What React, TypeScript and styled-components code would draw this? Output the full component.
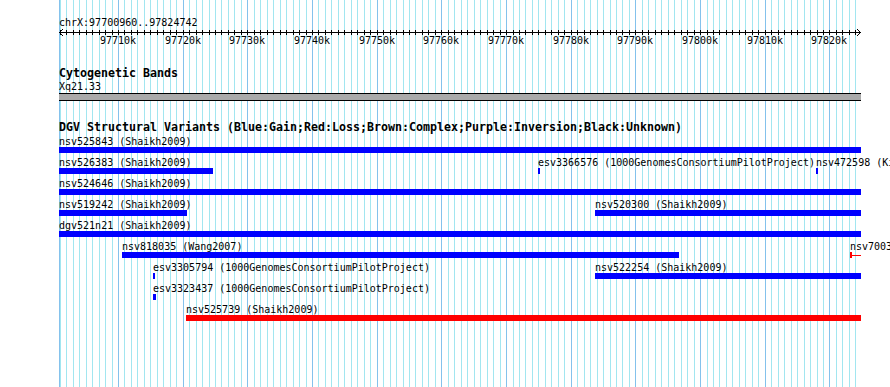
import * as React from 'react';
import styled, { createGlobalStyle } from 'styled-components';

const GlobalStyle = createGlobalStyle`
	html, body {
		margin: 0;
		padding: 0;
		background: #fff;
	}
`;

// genomic coordinate -> pixel column
const START = 97700960;
const X0 = 59.5;
const SCALE = 0.006468;
const toX = (pos: number) => Math.round(X0 + (pos - START) * SCALE);

const KBS = Array.from({ length: 124 }, (_, i) => 97701 + i);
const MAJOR = KBS.filter((kb) => kb % 10 === 0);

const Canvas = styled.div`
	position: relative;
	width: 890px;
	height: 387px;
	overflow: hidden;
	background: #fff;
	color: #000;
	font-family: "DejaVu Sans Mono", "Liberation Mono", monospace;
`;

const GridSvg = styled.svg`
	position: absolute;
	left: 0;
	top: 0;
`;

const Tracks = styled.div`
	position: relative;
	display: flex;
	flex-direction: column;
	padding-top: 16px;
`;

const Track = styled.section<{ $gap: number }>`
	display: flex;
	flex-direction: column;
	margin-top: ${(p) => p.$gap}px;
`;

const Gutter = styled.div`
	padding-left: 59px;
`;

const Small = styled.div`
	font-size: 10px;
	line-height: 13px;
	white-space: pre;
`;

const TrackTitle = styled.div`
	font-size: 11.63px;
	font-weight: bold;
	line-height: 13px;
	white-space: pre;
`;

const Scale = styled.div`
	position: relative;
	height: 18px;
`;

const ScaleSvg = styled.svg`
	position: absolute;
	left: 0;
	top: 0;
`;

const TickLabel = styled.span`
	position: absolute;
	top: 5px;
	width: 36px;
	text-align: center;
	font-size: 10px;
	line-height: 13px;
`;

const Band = styled.div`
	width: 802px;
	height: 6px;
	background: #aaaaaa;
	border-top: 1px solid #000;
	border-bottom: 1px solid #000;
`;

const Rows = styled.div`
	display: flex;
	flex-direction: column;
	margin-top: 1px;
`;

const Row = styled.div`
	position: relative;
	height: 21px;
`;

const Feature = styled.div`
	position: absolute;
	top: 0;
	display: flex;
	flex-direction: column;
`;

const Label = styled.span`
	font-size: 10px;
	line-height: 13px;
	white-space: pre;
`;

const Bar = styled.div<{ $color: string }>`
	height: 6px;
	margin-top: -1px;
	background: ${(p) => p.$color};
`;

const ClipMark = styled.div<{ $color: string }>`
	position: relative;
	height: 6px;
	margin-top: -1px;

	&::before {
		content: '';
		position: absolute;
		left: 0;
		top: 0;
		width: 2px;
		height: 6px;
		background: ${(p) => p.$color};
	}

	&::after {
		content: '';
		position: absolute;
		left: 2px;
		right: 0;
		top: 3px;
		height: 1px;
		background: ${(p) => p.$color};
	}
`;

type Variant = { x: number; w: number; label: string; color?: string; clipped?: boolean };

const BLUE = '#0000ff';
const RED = '#ff0000';

const rows: Variant[][] = [
	[{ x: 59, w: 802, label: 'nsv525843 (Shaikh2009)' }],
	[
		{ x: 59, w: 154, label: 'nsv526383 (Shaikh2009)' },
		{ x: 538, w: 2, label: 'esv3366576 (1000GenomesConsortiumPilotProject)' },
		{ x: 816, w: 2, label: 'nsv472598 (Kidd2008)' },
	],
	[{ x: 59, w: 802, label: 'nsv524646 (Shaikh2009)' }],
	[
		{ x: 59, w: 128, label: 'nsv519242 (Shaikh2009)' },
		{ x: 595, w: 266, label: 'nsv520300 (Shaikh2009)' },
	],
	[{ x: 59, w: 802, label: 'dgv521n21 (Shaikh2009)' }],
	[
		{ x: 122, w: 557, label: 'nsv818035 (Wang2007)' },
		{ x: 850, w: 11, label: 'nsv7003', color: RED, clipped: true },
	],
	[
		{ x: 153, w: 2, label: 'esv3305794 (1000GenomesConsortiumPilotProject)' },
		{ x: 595, w: 266, label: 'nsv522254 (Shaikh2009)' },
	],
	[{ x: 153, w: 3, label: 'esv3323437 (1000GenomesConsortiumPilotProject)' }],
	[{ x: 186, w: 675, label: 'nsv525739 (Shaikh2009)', color: RED }],
];

const Grid = () => (
	<GridSvg width={890} height={387} shapeRendering="crispEdges">
		<rect x={59} y={0} width={1} height={387} fill="#84c2ec" />
		{KBS.map((kb) => {
			const c = toX(kb * 1000);
			if (c <= 59) return null;
			return (
				<rect
					key={kb}
					x={c}
					y={0}
					width={1}
					height={387}
					fill={kb % 10 === 0 ? '#84c2ec' : '#a2e6f0'}
				/>
			);
		})}
	</GridSvg>
);

const Ruler = () => (
	<Track $gap={0}>
		<Gutter>
			<Small>chrX:97700960..97824742</Small>
		</Gutter>
		<Scale>
			<ScaleSvg width={890} height={18} shapeRendering="crispEdges">
				<rect x={59} y={3} width={802} height={1} fill="#000" />
				{KBS.map((kb) => (
					<rect key={kb} x={toX(kb * 1000)} y={1} width={1} height={5} fill="#000" />
				))}
				{[1, 2, 3].map((i) => (
					<React.Fragment key={i}>
						<rect x={59 + i} y={3 - i} width={1} height={1} fill="#000" />
						<rect x={59 + i} y={3 + i} width={1} height={1} fill="#000" />
						<rect x={860 - i} y={3 - i} width={1} height={1} fill="#000" />
						<rect x={860 - i} y={3 + i} width={1} height={1} fill="#000" />
					</React.Fragment>
				))}
			</ScaleSvg>
			{MAJOR.map((kb) => (
				<TickLabel key={kb} style={{ left: toX(kb * 1000) - 18 }}>
					{kb}k
				</TickLabel>
			))}
		</Scale>
	</Track>
);

export default function App() {
	return (
		<>
			<GlobalStyle />
			<Canvas>
				<Grid />
				<Tracks>
					<Ruler />
					<Track $gap={20}>
						<Gutter>
							<TrackTitle>Cytogenetic Bands</TrackTitle>
							<Small>Xq21.33</Small>
							<Band />
						</Gutter>
					</Track>
					<Track $gap={20}>
						<Gutter>
							<TrackTitle>
								DGV Structural Variants (Blue:Gain;Red:Loss;Brown:Complex;Purple:Inversion;Black:Unknown)
							</TrackTitle>
						</Gutter>
						<Rows>
							{rows.map((row, i) => (
								<Row key={i}>
									{row.map((v) => (
										<Feature key={v.label} style={{ left: v.x, width: v.w }}>
											<Label>{v.label}</Label>
											{v.clipped ? (
												<ClipMark $color={v.color ?? BLUE} />
											) : (
												<Bar $color={v.color ?? BLUE} />
											)}
										</Feature>
									))}
								</Row>
							))}
						</Rows>
					</Track>
				</Tracks>
			</Canvas>
		</>
	);
}
